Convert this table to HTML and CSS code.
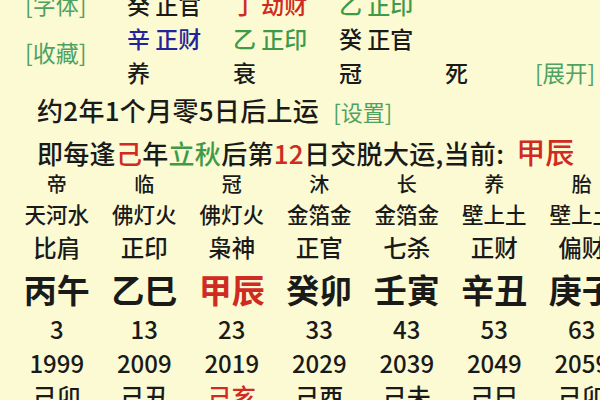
FILE: index.html
```html
<!DOCTYPE html>
<html lang="zh">
<head>
<meta charset="utf-8">
<link rel="stylesheet" href="styles.css">
</head>
<body>
<div class="page">
  <div class="top">
    <div class="links">
      <span class="link">[字体]</span>
      <span class="link second">[收藏]</span>
    </div>
    <div class="pillars">
      <span>癸 正官</span><span class="red">丁 劫财</span><span class="green">乙 正印</span><span></span>
      <span class="blue">辛 正财</span><span class="green">乙 正印</span><span>癸 正官</span><span></span>
      <span>养</span><span>衰</span><span>冠</span><span>死</span>
    </div>
    <div class="expand link">[展开]</div>
  </div>

  <div class="info">
    <div class="line">约2年1个月零5日后上运 <span class="link small">[设置]</span></div>
    <div class="line">即每逢<span class="red">己</span>年<span class="green">立秋</span>后第<span class="red">12</span>日交脱大运,当前: <span class="red big">甲辰</span></div>
  </div>

  <div class="table">
    <div class="row r-stage">
      <span>帝</span><span>临</span><span>冠</span><span>沐</span><span>长</span><span>养</span><span>胎</span>
    </div>
    <div class="row r-nayin">
      <span>天河水</span><span>佛灯火</span><span>佛灯火</span><span>金箔金</span><span>金箔金</span><span>壁上土</span><span>壁上土</span>
    </div>
    <div class="row r-god">
      <span>比肩</span><span>正印</span><span>枭神</span><span>正官</span><span>七杀</span><span>正财</span><span>偏财</span>
    </div>
    <div class="row r-gz">
      <span>丙午</span><span>乙巳</span><span class="red">甲辰</span><span>癸卯</span><span>壬寅</span><span>辛丑</span><span>庚子</span>
    </div>
    <div class="row r-age">
      <span>3</span><span>13</span><span>23</span><span>33</span><span>43</span><span>53</span><span>63</span>
    </div>
    <div class="row r-year">
      <span>1999</span><span>2009</span><span>2019</span><span>2029</span><span>2039</span><span>2049</span><span>2059</span>
    </div>
    <div class="row r-ln">
      <span>己卯</span><span>己丑</span><span class="red">己亥</span><span>己酉</span><span>己未</span><span>己巳</span><span>己卯</span>
    </div>
  </div>
</div>
</body>
</html>
```

FILE: styles.css
```css
html, body {
  margin: 0;
  padding: 0;
  width: 600px;
  height: 400px;
  overflow: hidden;
  background: #fcfad3;
}

.page {
  font-family: "Noto Sans CJK SC", "Noto Sans", sans-serif;
  font-weight: 500;
  color: #1a1a1a;
  width: 600px;
  height: 400px;
  overflow: hidden;
}

.red { color: #cf2b22; }
.green { color: #3f9a48; }
.blue { color: #24249a; }

.link {
  color: #4fa262;
  font-weight: 400;
}

.top {
  display: flex;
  margin-top: -13px;
  padding-left: 25px;
  font-size: 23px;
  line-height: 34px;
}

.links {
  display: flex;
  flex-direction: column;
  width: 102px;
  flex: none;
}

.links .link {
  font-size: 23px;
  line-height: 34px;
}

.links .second {
  margin-top: 14px;
}

.pillars {
  display: grid;
  grid-template-columns: 106px 106px 106px 90px;
}

.pillars span {
  white-space: nowrap;
  height: 34px;
}

.expand {
  align-self: flex-end;
  font-size: 22.5px;
  white-space: nowrap;
}

.info {
  padding-top: 1px;
  padding-left: 37px;
  font-size: 26px;
  letter-spacing: 0.3px;
  line-height: 40px;
  white-space: nowrap;
}

.info .small {
  font-size: 22px;
  letter-spacing: 0;
  margin-left: 8px;
}

.info .big {
  font-size: 29px;
  letter-spacing: 0;
  margin-left: 6px;
}

.table {
  padding-left: 13px;
  width: 620px;
}

.row {
  display: grid;
  grid-template-columns: repeat(7, 87.5px);
  text-align: center;
  white-space: nowrap;
}

.r-stage { font-size: 20px; line-height: 22px; }
.r-nayin { font-size: 21.5px; line-height: 37px; }
.r-god { font-size: 23.5px; line-height: 30px; }
.r-gz { font-size: 33px; line-height: 54px; font-weight: bold; }
.r-age { font-size: 24px; line-height: 26px; }
.r-year { font-size: 24px; line-height: 42px; }
.r-ln { font-size: 24px; line-height: 24px; }
```
